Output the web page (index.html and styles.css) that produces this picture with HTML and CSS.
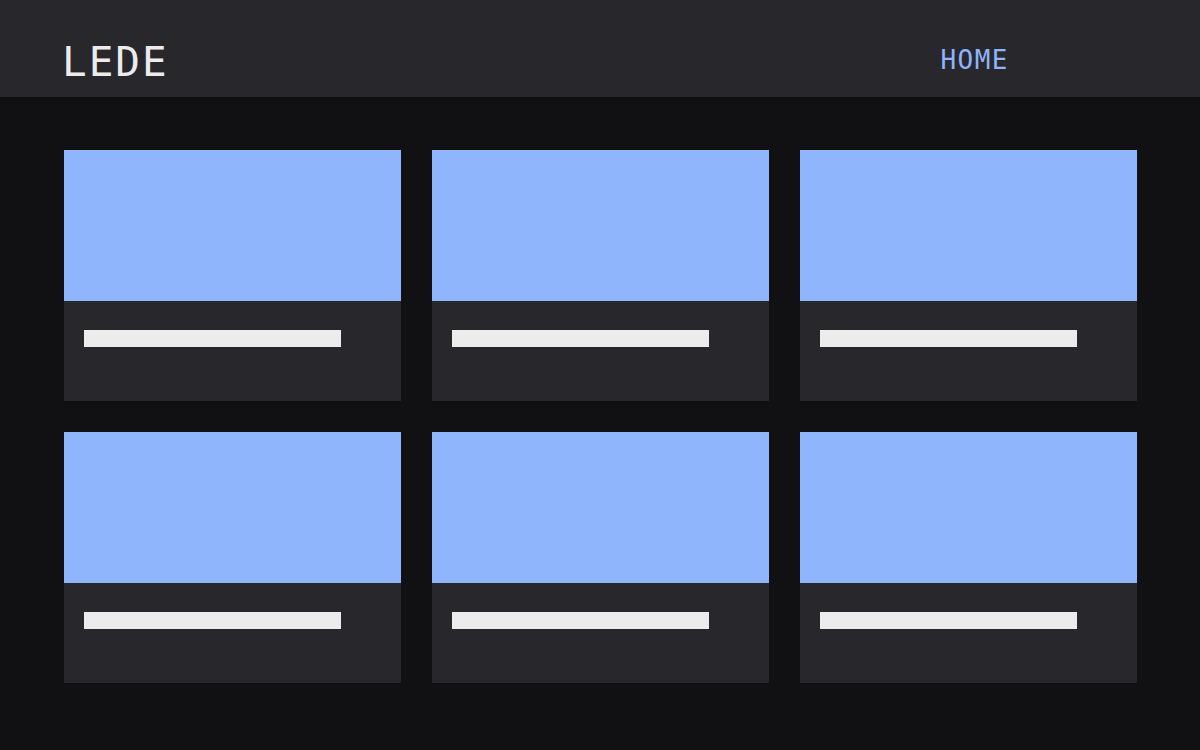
FILE: index.html
```html
<!DOCTYPE html>
<html lang="en">
<head>
    <meta charset="UTF-8">
    <title>LEDE</title>
    <link rel="stylesheet" href="styles.css">
</head>
<body>

<div class="top_bar">
    <div class="logo">LEDE</div>
    <a class="nav_link" href="#">HOME</a>
</div>

<div class="grid">
    <div class="card"><div class="thumb"></div><div class="info"><div class="line"></div></div></div>
    <div class="card"><div class="thumb"></div><div class="info"><div class="line"></div></div></div>
    <div class="card"><div class="thumb"></div><div class="info"><div class="line"></div></div></div>
    <div class="card"><div class="thumb"></div><div class="info"><div class="line"></div></div></div>
    <div class="card"><div class="thumb"></div><div class="info"><div class="line"></div></div></div>
    <div class="card"><div class="thumb"></div><div class="info"><div class="line"></div></div></div>
</div>

</body>
</html>
```

FILE: styles.css
```css
*{
    margin: 0px;
    padding: 0px;
    box-sizing: border-box;
}
body{
    background-color: #111113;
    font-family: "DejaVu Sans Mono", "Liberation Mono", monospace;
    -webkit-font-smoothing: none;
}

.top_bar{
    height: 97px;
    background-color: #28272c;
    display: flex;
    align-items: flex-start;
    justify-content: space-between;
    padding: 0 191px 0 62px;
}
.logo{
    color: #ececec;
    font-size: 41px;
    letter-spacing: 2px;
    line-height: 1;
    margin-top: 42px;
}
.nav_link{
    color: #8fb4fc;
    font-size: 26px;
    letter-spacing: 1.5px;
    text-decoration: none;
    line-height: 1;
    margin-top: 47px;
}

/*卡片网格*/
.grid{
    display: grid;
    grid-template-columns: repeat(3, 337px);
    gap: 31px;
    padding: 53px 0 0 64px;
}
.card{
    height: 251px;
    background-color: #28272c;
}
.thumb{
    height: 151px;
    background-color: #8fb5fc;
}
.info{
    padding: 29px 20px 0 20px;
}
.line{
    width: 257px;
    height: 17px;
    background-color: #ececec;
}
```
